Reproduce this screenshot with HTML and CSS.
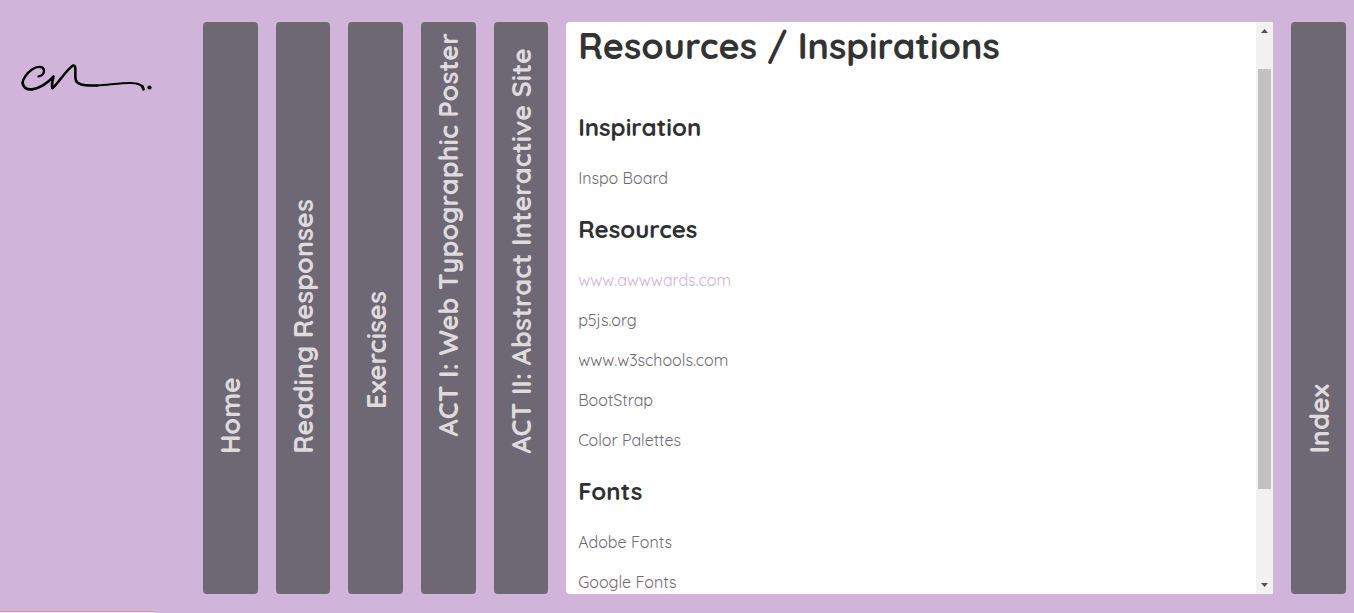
FILE: index.html
```html
<!DOCTYPE html>
<html lang="en">
<head>
<meta charset="utf-8">
<meta name="viewport" content="width=device-width, initial-scale=1">
<title>Resources / Inspirations</title>
<link rel="stylesheet" href="styles.css">
</head>
<body>
<div class="page">
  <header class="brand">
    <a href="#home" aria-label="cn. home">
      <svg class="signature" viewBox="0 0 140 36" fill="none" stroke="#000" stroke-linecap="round" stroke-linejoin="round">
        <path stroke-width="2.3" d="M18.500 14.300C21.500 14.500 24.300 11.500 24 8.300C23.500 4 17 4 12 7.500C7 11 2.800 17 2.600 20.500"/>
        <path stroke-width="2.7" d="M2.600 20.500C3 25.500 7 28 12 27.300C19 26.500 28 21 33.400 14.500C33 18 31 22.500 32.500 26"/>
        <path stroke-width="2.500" d="M32.500 26C37 23 46 8 53 3.500C57.500 2.500 54 14 56 18.500C57.500 23 66 24 77 23.400"/>
        <path stroke-width="2" d="M77 23.400C90 22.500 101 20.900 110 20.900C118 20.900 123 23 123.500 27.300"/>
        <path stroke-width="2.700" d="M122.500 24.500L123.400 27.300"/>
        <circle cx="129.500" cy="25.500" r="2.100" fill="#000" stroke="none"/>
      </svg>
    </a>
  </header>
  <div class="tabs">
    <a class="tab" href="#home"><span>Home</span></a>
    <a class="tab" href="#reading"><span>Reading Responses</span></a>
    <a class="tab tab-exercises" href="#exercises"><span>Exercises</span></a>
    <a class="tab tab-act-one" href="#act-one"><span>ACT I: Web Typographic Poster</span></a>
    <a class="tab" href="#act-two"><span>ACT II: Abstract Interactive Site</span></a>
    <main class="panel">
      <div class="content">
        <h1>Resources / Inspirations</h1>
        <h2>Inspiration</h2>
        <p><a href="#inspo">Inspo Board</a></p>
        <h2>Resources</h2>
        <p><a class="active" href="#awwwards">www.awwwards.com</a></p>
        <p><a href="#p5js">p5js.org</a></p>
        <p><a href="#w3schools">www.w3schools.com</a></p>
        <p><a href="#bootstrap">BootStrap</a></p>
        <p><a href="#palettes">Color Palettes</a></p>
        <h2>Fonts</h2>
        <p><a href="#adobe">Adobe Fonts</a></p>
        <p><a href="#google">Google Fonts</a></p>
      </div>
      <div class="scrollbar" aria-hidden="true">
        <svg class="arrow" viewBox="0 0 17 17"><path d="M5 11h7L8.500 7z" fill="#505050"/></svg>
        <div class="track"><div class="thumb"></div></div>
        <svg class="arrow" viewBox="0 0 17 17"><path d="M5 6h7L8.500 10z" fill="#505050"/></svg>
      </div>
    </main>
    <a class="tab" href="#index"><span>Index</span></a>
  </div>
</div>
<div class="status"></div>
</body>
</html>
```
FILE: styles.css
```css
* { box-sizing: border-box; }

body {
  margin: 0;
  background: #d0b4da;
  color: #2f3032;
  font-family: Quicksand, Lato, "Open Sans", sans-serif;
}

a { color: inherit; text-decoration: none; }

.page {
  display: grid;
  grid-template-columns: 15% minmax(0, 1fr);
  height: 100vh;
  overflow: hidden;
}

.brand { padding: 62px 20px; }

.signature { display: block; width: 140px; }

.tabs {
  display: grid;
  grid-template-columns: repeat(5, minmax(0, 1fr)) minmax(0, 12.95fr) minmax(0, 1fr);
  gap: 18px;
  min-height: 0;
  padding: 22px 8px 19px 0;
}

.tab {
  display: flex;
  align-items: flex-end;
  justify-content: center;
  min-height: 0;
  padding-bottom: 140px;
  border-radius: 4px;
  background: #6e6874;
  color: #dedade;
  font-size: 27px;
  font-weight: 700;
  line-height: 36px;
  white-space: nowrap;
}

.tab span { writing-mode: vertical-rl; transform: rotate(180deg); }

.tab-exercises { padding-bottom: 185px; }

.tab-act-one { padding-bottom: 158px; }

.panel {
  display: grid;
  grid-template-columns: minmax(0, 1fr) 17px;
  min-height: 0;
  overflow: hidden;
  border-radius: 4px 0 0 4px;
  background: #fff;
}

.content {
  min-height: 0;
  padding: 1px 12px 0;
  overflow: hidden;
}

h1 {
  margin: 0 0 43px;
  color: #333;
  font-size: 36px;
  line-height: 46px;
}

h2 {
  margin: 24px 0;
  font-size: 24px;
  line-height: 30px;
}

p {
  margin: 16px 0;
  color: #6e6874;
  font-size: 16px;
  line-height: 24px;
}

.active { color: #d0b4da; }

.scrollbar {
  display: flex;
  flex-direction: column;
  min-height: 0;
  background: #f1f1f1;
}

.arrow { display: block; width: 17px; height: 17px; }

.track { flex: 1; padding: 30px 2px 0; }

.thumb { height: 82.6%; background: #c1c1c1; }

.status {
  position: fixed;
  bottom: 0;
  left: 0;
  width: 155px;
  height: 2px;
  border-top: 1px solid #c69bb8;
  border-top-right-radius: 2px;
  background: #fbe6f5;
}
```
